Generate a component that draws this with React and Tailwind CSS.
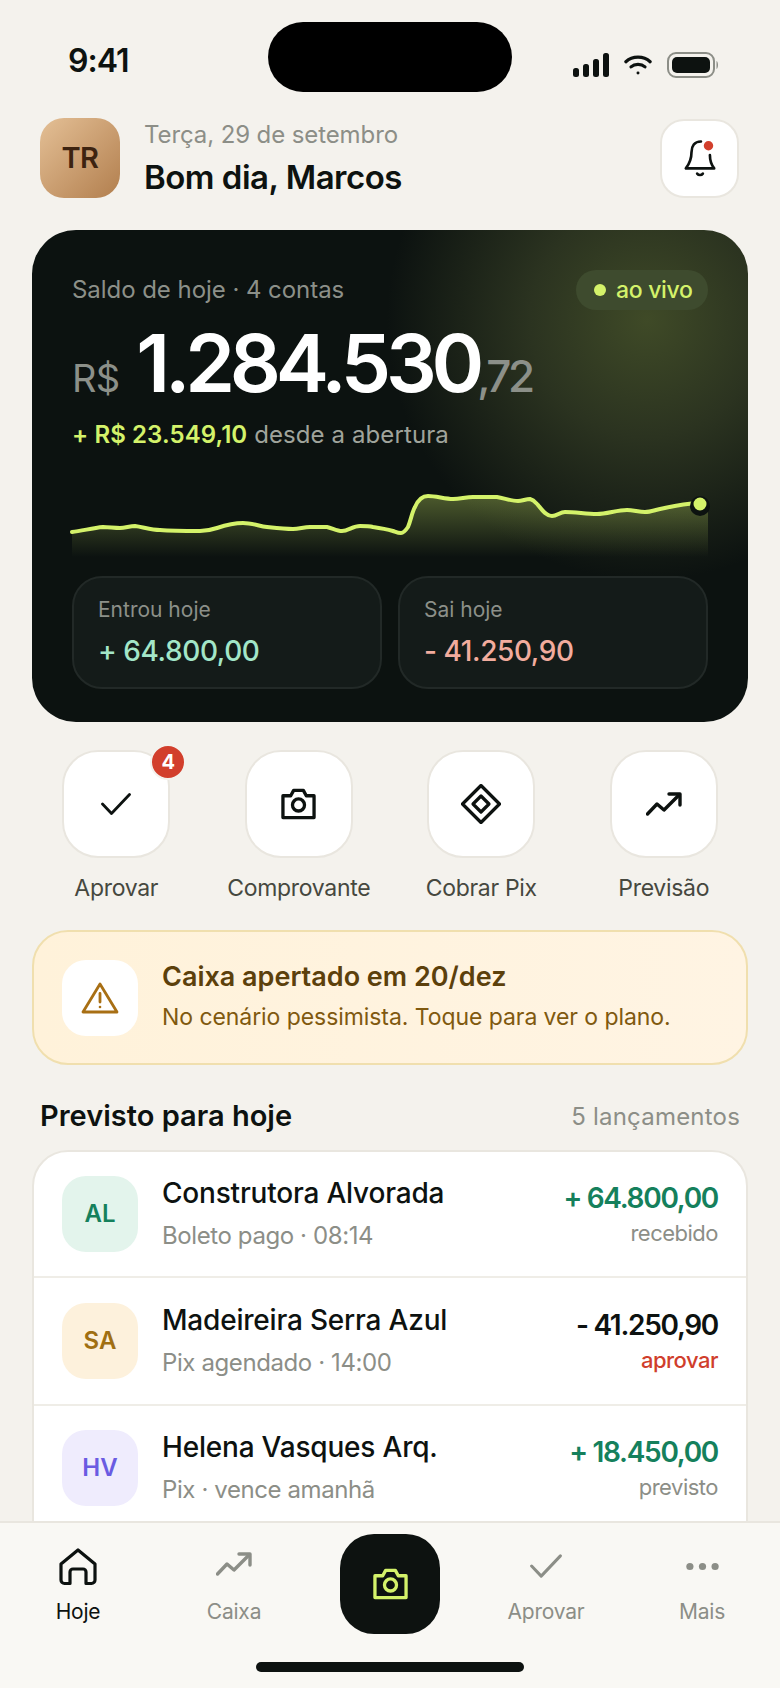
import React from 'react'

const chartLine =
  'M72 532 C82 531 92 528 103 527 C109 527 114 528 120 528 C125 528 130 526 135 526 C143 527 151 530 160 530 C172 531 188 531 200 531 C206 531 211 530 217 528 C226 525 234 523 243 523 C252 523 259 526 267 527 C276 528 284 529 293 529 C299 529 304 527 310 527 C316 527 321 527 327 527 C332 528 337 531 342 531 C348 531 353 526 360 526 C365 526 369 526 373 527 C380 528 386 529 393 531 C396 532 398 533 401 533 C404 533 406 530 408 527 C411 520 412 512 415 507 C418 500 422 496 428 496 C436 496 445 499 453 499 C460 499 466 497 473 497 C481 497 489 497 497 497 C504 498 511 501 518 501 C522 501 526 499 530 499 C534 500 536 503 538 505 C542 510 546 516 552 516 C557 516 560 512 565 512 C576 512 586 514 597 514 C607 514 617 510 627 510 C633 510 639 512 645 512 C650 512 655 510 660 509 C670 507 680 504 700 503'

const rows = [
  { tag: 'AL', h: 'h-[126px]', tagBg: 'bg-[#e3f4ec]', tagText: 'text-[#15805c]', name: 'Construtora Alvorada', sub: 'Boleto pago · 08:14', amount: '+ 64.800,00', amountColor: 'text-[#15805c]', note: 'recebido', noteColor: 'text-[#8c8e87]' },
  { tag: 'SA', h: 'h-[128px]', tagBg: 'bg-[#fdf1dc]', tagText: 'text-[#a06f12]', name: 'Madeireira Serra Azul', sub: 'Pix agendado · 14:00', amount: '- 41.250,90', amountColor: 'text-[#0d1210]', note: 'aprovar', noteColor: 'text-[#d03e2c] font-medium' },
  { tag: 'HV', h: 'h-[126px]', tagBg: 'bg-[#efecfd]', tagText: 'text-[#6a5be2]', name: 'Helena Vasques Arq.', sub: 'Pix · vence amanhã', amount: '+ 18.450,00', amountColor: 'text-[#15805c]', note: 'previsto', noteColor: 'text-[#8c8e87]' },
]

function CameraIcon({ className }) {
  return (
    <svg viewBox="0 0 36 32" fill="none" stroke="currentColor" strokeWidth="3.4" strokeLinejoin="round" className={className}>
      <path d="M2 7.5h8l3-5.5h10l3 5.5h8v22.5H2z" />
      <circle cx="18" cy="17" r="6.2" />
    </svg>
  )
}

function TrendIcon({ className }) {
  return (
    <svg viewBox="0 0 36 24" fill="none" stroke="currentColor" strokeWidth="3.4" strokeLinecap="round" strokeLinejoin="round" className={className}>
      <path d="M1.5 22 L11 12 L18 18 L33 3" />
      <path d="M23 2 H34 V13" />
    </svg>
  )
}

function CheckIcon({ className }) {
  return (
    <svg viewBox="0 0 30 22" fill="none" stroke="currentColor" strokeWidth="2.8" strokeLinecap="round" strokeLinejoin="round" className={className}>
      <path d="M1.5 11 L10.5 20.5 L28.5 1.5" />
    </svg>
  )
}

function DiamondIcon({ className }) {
  return (
    <svg viewBox="0 0 40 40" fill="none" stroke="currentColor" strokeWidth="3.2" strokeLinejoin="round" className={className}>
      <path d="M20 1.5 L38.5 20 L20 38.5 L1.5 20 Z" />
      <path d="M20 12 L28 20 L20 28 L12 20 Z" />
    </svg>
  )
}

function ActionButton({ label, badge, children }) {
  return (
    <div className="flex flex-col items-center">
      <div className="relative w-[108px] h-[108px] rounded-[36px] bg-white border-2 border-[#e9e6df] flex items-center justify-center text-[#0d1210]">
        {children}
        {badge && (
          <span className="absolute top-[-8px] right-[-18px] w-[36px] h-[36px] rounded-full bg-[#d23f2c] border-2 border-[#f4f2ed] text-white text-[20px] font-bold flex items-center justify-center">
            {badge}
          </span>
        )}
      </div>
      <span className="mt-[15px] text-[23px] leading-[30px] text-[#46483f] tracking-[-0.3px] whitespace-nowrap">{label}</span>
    </div>
  )
}

function Row({ row }) {
  return (
    <div className={`flex items-center ${row.h} px-[28px] border-b-2 border-[#efede7]`}>
      <div className={`w-[76px] h-[76px] rounded-[24px] flex items-center justify-center text-[24px] font-semibold shrink-0 ${row.tagBg} ${row.tagText}`}>
        {row.tag}
      </div>
      <div className="ml-[24px] flex-1 flex flex-col pb-[2px]">
        <span className="text-[28px] leading-[34px] font-medium text-[#0d1210] tracking-[-0.2px]">{row.name}</span>
        <span className="mt-[11px] text-[24px] leading-[30px] text-[#8c8e87] tracking-[-0.4px]">{row.sub}</span>
      </div>
      <div className="flex flex-col items-end">
        <span className={`text-[28px] leading-[34px] font-semibold tracking-[-1.3px] ${row.amountColor}`}>{row.amount}</span>
        <span className={`mt-[4px] text-[22px] leading-[28px] tracking-[-0.5px] ${row.noteColor}`}>{row.note}</span>
      </div>
    </div>
  )
}

function NavItem({ label, active, children }) {
  return (
    <div className={`flex flex-col items-center pt-[25px] ${active ? 'text-[#0d1210]' : 'text-[#8c8e87]'}`}>
      <div className="h-[38px] flex items-center justify-center">{children}</div>
      <span className="mt-[13px] text-[21px] leading-[26px] tracking-[-0.2px]">{label}</span>
    </div>
  )
}

export default function App() {
  return (
    <div className="relative w-[780px] h-[1688px] overflow-hidden bg-[#f4f2ed] font-['Inter',sans-serif]">
      {/* status bar */}
      <div className="flex items-start h-[118px] pt-[22px] pl-[68px]">
        <span className="mt-[19px] text-[32px] leading-[40px] font-semibold text-[#0d1210] tracking-[-1px] w-[200px]">9:41</span>
        <div className="w-[244px] h-[70px] rounded-[35px] bg-black" />
        <div className="w-[207px] flex items-center justify-end gap-[15px] mt-[30px] text-[#0d1210]">
          <svg viewBox="0 0 36 24" className="w-[36px] h-[24px]" fill="currentColor">
            <rect x="0" y="15" width="6" height="9" rx="2.5" />
            <rect x="10" y="11" width="6" height="13" rx="2.5" />
            <rect x="20" y="6" width="6" height="18" rx="2.5" />
            <rect x="30" y="0" width="6" height="24" rx="2.5" />
          </svg>
          <svg viewBox="0 0 30 22" className="w-[28px] h-[22px]" fill="none" stroke="currentColor" strokeWidth="3.4" strokeLinecap="round">
            <path d="M2 7.5 C9 1 21 1 28 7.5" />
            <path d="M7.5 13 C11.5 9.5 18.5 9.5 22.5 13" />
            <circle cx="15" cy="19.5" r="1.6" fill="currentColor" stroke="none" />
          </svg>
          <svg viewBox="0 0 52 26" className="w-[52px] h-[26px]">
            <rect x="1" y="1" width="46" height="24" rx="8" fill="none" stroke="#8c8e87" strokeWidth="2" />
            <rect x="5" y="5" width="38" height="16" rx="5" fill="#0d1210" />
            <path d="M49.5 9 C51.5 10 51.5 16 49.5 17 Z" fill="#8c8e87" />
          </svg>
        </div>
      </div>

      {/* header */}
      <div className="flex items-center h-[80px] pl-[40px] pr-[41px]">
        <div className="w-[80px] h-[80px] rounded-[24px] bg-gradient-to-br from-[#e4c096] to-[#b27f4e] flex items-center justify-center text-[29px] font-semibold text-[#3d2310] tracking-[-0.5px]">
          TR
        </div>
        <div className="ml-[24px] flex-1 flex flex-col">
          <span className="text-[24px] leading-[30px] text-[#8c8e87] tracking-[-0.1px]">Terça, 29 de setembro</span>
          <span className="mt-[7px] text-[33px] leading-[40px] font-semibold text-[#0d1210] tracking-[-0.5px]">Bom dia, Marcos</span>
        </div>
        <div className="relative w-[79px] h-[79px] rounded-[24px] bg-white border-2 border-[#e9e6df] flex items-center justify-center">
          <svg viewBox="0 0 36 40" className="w-[34px] h-[38px]" fill="none" stroke="#0d1210" strokeWidth="2.8" strokeLinecap="round" strokeLinejoin="round">
            <path d="M19 2.5 C12 2.5 9 7.5 9 14 C9 22 7 26 3 31 H33 C30 27 28.5 23 28.5 17" />
            <path d="M15 36.5 C16.5 38.5 19.5 38.5 21 36.5" />
            <circle cx="27" cy="7" r="5" fill="#d23f2c" stroke="none" />
          </svg>
        </div>
      </div>

      {/* balance card */}
      <div className="mt-[32px] mx-[32px] h-[492px] rounded-[44px] px-[40px] pt-[40px] bg-[#0c1210] bg-[radial-gradient(circle_260px_at_615px_90px,#3f4a27_0%,#2b3320_45%,#0c1210_100%)]">
        <div className="flex items-center justify-between h-[40px]">
          <span className="text-[24px] text-[#8c9089] tracking-[-0.05px]">Saldo de hoje · 4 contas</span>
          <div className="flex items-center h-[40px] w-[132px] pl-[18px] rounded-full bg-[#3e4b2e]">
            <span className="w-[12px] h-[12px] rounded-full bg-[#d4f26a]" />
            <span className="ml-[10px] text-[23px] font-medium text-[#d4f26a] tracking-[-0.3px]">ao vivo</span>
          </div>
        </div>
        <div className="mt-[13px] flex items-baseline h-[80px] whitespace-nowrap">
          <span className="text-[38px] leading-[40px] text-[#8c9089] tracking-[-0.8px]">R$</span>
          <span className="ml-[17px] text-[80px] leading-[80px] font-semibold text-white tracking-[-5.2px]">1.284.530</span>
          <span className="-ml-[2px] text-[44px] leading-[44px] font-medium text-[#8c9089] tracking-[-3.4px]">,72</span>
        </div>
        <div className="mt-[17px] text-[24px] leading-[30px] tracking-[0.1px] whitespace-nowrap">
          <span className="font-semibold text-[#d4f26a]">+ R$ 23.549,10</span>
          <span className="text-[#a0a49c]"> desde a abertura</span>
        </div>
        <svg viewBox="72 490 636 70" className="mt-[40px] block w-[636px] h-[70px] overflow-visible">
          <defs>
            <linearGradient id="chartFill" x1="0" y1="0" x2="0" y2="1">
              <stop offset="0%" stopColor="#d4f26a" stopOpacity="0.32" />
              <stop offset="100%" stopColor="#d4f26a" stopOpacity="0" />
            </linearGradient>
          </defs>
          <path d={`${chartLine} L708 504 L708 557 L72 557 Z`} fill="url(#chartFill)" />
          <path d={chartLine} fill="none" stroke="#d4f26a" strokeWidth="4" strokeLinecap="round" />
          <circle cx="700" cy="506" r="10" fill="#0c1210" />
          <circle cx="700" cy="504" r="6.5" fill="#d4f26a" />
        </svg>
        <div className="mt-[16px] grid grid-cols-2 gap-[16px]">
          <div className="h-[113px] rounded-[30px] bg-[#141b19] border-2 border-[#222927] pl-[24px] pt-[18px]">
            <div className="text-[21px] leading-[28px] text-[#8c9089] tracking-[0px]">Entrou hoje</div>
            <div className="mt-[9px] text-[28px] leading-[36px] font-medium text-[#a3e6c8] tracking-[-0.4px]">+ 64.800,00</div>
          </div>
          <div className="h-[113px] rounded-[30px] bg-[#141b19] border-2 border-[#222927] pl-[24px] pt-[18px]">
            <div className="text-[21px] leading-[28px] text-[#8c9089] tracking-[0px]">Sai hoje</div>
            <div className="mt-[9px] text-[28px] leading-[36px] font-medium text-[#f2ac9e] tracking-[-0.4px]">- 41.250,90</div>
          </div>
        </div>
      </div>

      {/* quick actions */}
      <div className="mt-[28px] px-[25px] grid grid-cols-4">
        <ActionButton label="Aprovar" badge="4">
          <CheckIcon className="w-[30px] h-[22px]" />
        </ActionButton>
        <ActionButton label="Comprovante">
          <CameraIcon className="w-[35px] h-[32px]" />
        </ActionButton>
        <ActionButton label="Cobrar Pix">
          <DiamondIcon className="w-[40px] h-[40px]" />
        </ActionButton>
        <ActionButton label="Previsão">
          <TrendIcon className="w-[36px] h-[24px]" />
        </ActionButton>
      </div>

      {/* alert */}
      <div className="mt-[27px] mx-[32px] h-[135px] rounded-[36px] border-2 border-[#f0dfae] bg-gradient-to-r from-[#fff2da] to-[#fff4e3] flex items-center pl-[28px]">
        <div className="w-[76px] h-[76px] rounded-[24px] bg-white flex items-center justify-center">
          <svg viewBox="0 0 38 32" className="w-[38px] h-[32px]" fill="none" stroke="#a86f14" strokeWidth="2.8" strokeLinejoin="round" strokeLinecap="round">
            <path d="M19 2 L36 30 H2 Z" />
            <path d="M19 11.5 V20" />
            <circle cx="19" cy="25" r="1.3" fill="#a86f14" stroke="none" />
          </svg>
        </div>
        <div className="ml-[24px] flex flex-col">
          <span className="-mt-[3px] text-[27px] leading-[34px] font-semibold text-[#5c400b]">Caixa apertado em 20/dez</span>
          <span className="mt-[8px] text-[23px] leading-[30px] text-[#80590f] tracking-[-0.07px]">No cenário pessimista. Toque para ver o plano.</span>
        </div>
      </div>

      {/* list */}
      <div className="mt-[33px] px-[40px] h-[36px] flex items-center justify-between">
        <span className="text-[29px] font-semibold text-[#0d1210]">Previsto para hoje</span>
        <span className="mt-[2px] text-[24px] text-[#8c8e87] tracking-[0.2px]">5 lançamentos</span>
      </div>
      <div className="mt-[16px] mx-[32px] rounded-t-[36px] bg-white border-2 border-[#e9e6df]">
        {rows.map((row) => (
          <Row key={row.tag} row={row} />
        ))}
      </div>

      {/* bottom nav, sits over the list */}
      <div className="absolute left-0 right-0 bottom-0 h-[167px] bg-[#f9f8f4] border-t-2 border-[#e9e6df] grid grid-cols-5">
        <NavItem label="Hoje" active>
          <svg viewBox="0 0 38 38" className="w-[38px] h-[38px]" fill="none" stroke="currentColor" strokeWidth="3.2" strokeLinejoin="round">
            <path d="M2 16 L19 2 L36 16 V32 a3.5 3.5 0 0 1-3.5 3.5 H27 V24 a3 3 0 0 0-3-3 H14 a3 3 0 0 0-3 3 V35.5 H5.5 A3.5 3.5 0 0 1 2 32 Z" />
          </svg>
        </NavItem>
        <NavItem label="Caixa">
          <TrendIcon className="w-[36px] h-[24px] -translate-y-[3px]" />
        </NavItem>
        <div className="flex justify-center pt-[11px]">
          <div className="w-[100px] h-[100px] rounded-[34px] bg-[#0d1210] flex items-center justify-center text-[#d4f26a]">
            <CameraIcon className="w-[35px] h-[32px]" />
          </div>
        </div>
        <NavItem label="Aprovar">
          <CheckIcon className="w-[32px] h-[24px] -translate-y-[1px]" />
        </NavItem>
        <NavItem label="Mais">
          <svg viewBox="0 0 36 10" className="w-[33px] h-[9px] -translate-y-[1px]" fill="currentColor">
            <circle cx="4" cy="5" r="4" />
            <circle cx="18" cy="5" r="4" />
            <circle cx="32" cy="5" r="4" />
          </svg>
        </NavItem>
        <div className="absolute left-[256px] bottom-[16px] w-[268px] h-[10px] rounded-full bg-[#0d1210]" />
      </div>
    </div>
  )
}
